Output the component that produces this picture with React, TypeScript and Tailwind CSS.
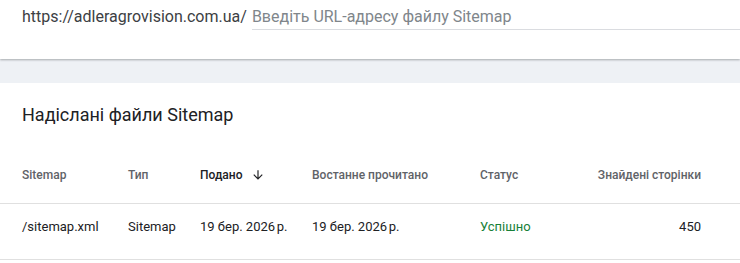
import React from 'react';

const rows = [
  { path: '/sitemap.xml', type: 'Sitemap', submitted: '19 бер. 2026\u202Fр.', lastRead: '19 бер. 2026\u202Fр.', status: 'Успішно', pages: 450 },
];

export default function App() {
  return (
    <div className="w-[740px] h-[263px] overflow-hidden bg-[#eef1f5] font-['Roboto',sans-serif]">
      {/* URL input card */}
      <div className="h-[59px] bg-white shadow-[0_1px_2px_rgba(60,64,67,0.4)] flex items-start pl-[22px] pt-[5px]">
        <span className="text-[16px] leading-[24px] text-[#3c4043]">https://adleragrovision.com.ua/</span>
        <div className="ml-[5px] flex-1 h-[25px] border-b border-[#dadce0]">
          <span className="text-[16px] leading-[24px] text-[#80868b]">Введіть URL-адресу файлу Sitemap</span>
        </div>
      </div>

      {/* Submitted sitemaps */}
      <div className="mt-[24px] bg-white pb-[16px]">
        <h2 className="pl-[22px] pt-[20px] text-[18px] leading-[24px] text-[#202124]">Надіслані файли Sitemap</h2>
        <table className="mt-[23px] w-[740px] table-fixed border-collapse text-left">
          <colgroup>
            <col className="w-[128px]" />
            <col className="w-[72px]" />
            <col className="w-[112px]" />
            <col className="w-[168px]" />
            <col className="w-[100px]" />
            <col />
          </colgroup>
          <thead>
            <tr className="border-b border-[#e0e0e0] text-[12px] leading-[16px] text-[#5f6368]">
              <th className="pl-[22px] pt-[17px] pb-[20px] align-top font-medium">Sitemap</th>
              <th className="pt-[17px] pb-[20px] align-top font-medium">Тип</th>
              <th className="pt-[17px] pb-[20px] align-top font-medium text-[#202124]">
                <span className="inline-flex items-center gap-[9px]">
                  Подано
                  <svg width="14" height="14" viewBox="0 0 24 24" fill="#202124">
                    <path d="M20 12l-1.41-1.41L13 16.17V4h-2v12.17l-5.58-5.59L4 12l8 8 8-8z" />
                  </svg>
                </span>
              </th>
              <th className="pt-[17px] pb-[20px] align-top font-medium">Востанне прочитано</th>
              <th className="pt-[17px] pb-[20px] align-top font-medium">Статус</th>
              <th className="pr-[39px] pt-[17px] pb-[20px] align-top text-right font-medium">Знайдені сторінки</th>
            </tr>
          </thead>
          <tbody>
            {rows.map(r => (
              <tr key={r.path} className="border-b border-[#e0e0e0] text-[13px] leading-[16px] text-[#202124]">
                <td className="pl-[22px] pt-[15px] pb-[24px] align-top">{r.path}</td>
                <td className="pt-[15px] pb-[24px] align-top">{r.type}</td>
                <td className="pt-[15px] pb-[24px] align-top">{r.submitted}</td>
                <td className="pt-[15px] pb-[24px] align-top">{r.lastRead}</td>
                <td className="pt-[15px] pb-[24px] align-top text-[#188038]">{r.status}</td>
                <td className="pr-[39px] pt-[15px] pb-[24px] align-top text-right">{r.pages}</td>
              </tr>
            ))}
          </tbody>
        </table>
      </div>
    </div>
  );
}
